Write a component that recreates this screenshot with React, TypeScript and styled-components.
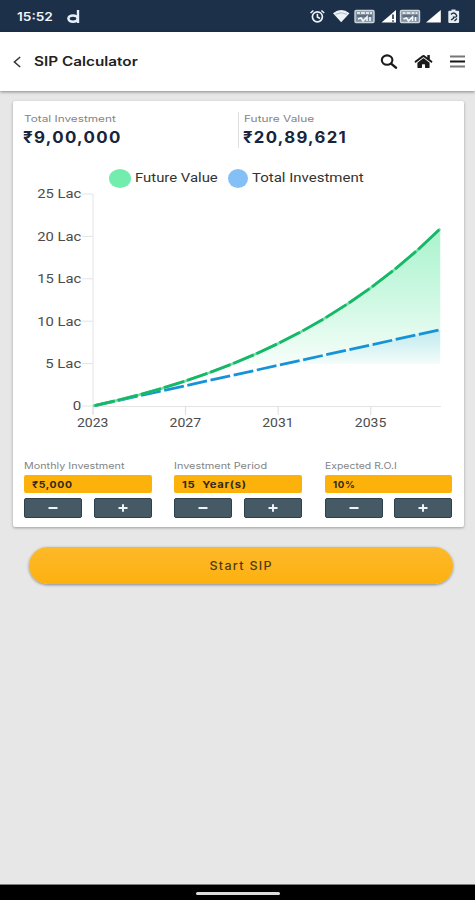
import React from "react";
import styled, { createGlobalStyle } from "styled-components";
import { FaHome } from "react-icons/fa";

const GlobalStyle = createGlobalStyle`
  * { box-sizing: border-box; }
  body { margin: 0; background: #e7e7e7; }
`;

const Screen = styled.div`
  width: 475px;
  height: 900px;
  display: flex;
  flex-direction: column;
  overflow: hidden;
  background: #e7e7e7;
  font-family: Inter, "Liberation Sans", sans-serif;
`;

/* Wide lettering: glyphs are widened from their left edge. */
const Wide = styled.span<{ $x: number; $origin?: string }>`
  display: inline-block;
  white-space: pre;
  transform: scaleX(${(p) => p.$x});
  transform-origin: ${(p) => p.$origin ?? "left"} center;
`;

const StatusBar = styled.div`
  flex: none;
  height: 32px;
  padding: 1px 14px 0 17px;
  display: flex;
  align-items: center;
  justify-content: space-between;
  background: #1c304a;
  color: #f2f6fa;
`;

const Clock = styled(Wide)`
  width: 50px;
  font-size: 12px;
  font-weight: 600;
`;

const StatusLeft = styled.div`
  display: flex;
  align-items: center;
`;

const Header = styled.header`
  flex: none;
  height: 59px;
  padding: 0 9.5px 0 12px;
  display: flex;
  align-items: center;
  background: #fff;
  box-shadow: 0 1px 3px rgba(0, 0, 0, 0.42);
`;

const Title = styled.h1`
  flex: 1;
  margin: 0 0 0 12px;
  font-size: 12.5px;
  line-height: 18px;
  font-weight: 600;
  color: #222;
`;

const HeaderIcons = styled.div`
  display: flex;
  align-items: center;
  gap: 17px;
  color: #1b1b1b;
`;

const IconButton = styled.button`
  display: flex;
  padding: 0;
  border: 0;
  background: none;
  color: inherit;
`;

const HomeIcon = styled(FaHome)`
  width: 17px;
  height: 15px;
  transform: scaleX(1.08);
`;

const Card = styled.main`
  flex: none;
  height: 426px;
  margin: 10px 11px 0 13px;
  padding: 11px 12px 10px 11px;
  display: flex;
  flex-direction: column;
  background: #fff;
  border-radius: 2px;
  box-shadow: 0 1px 3px rgba(0, 0, 0, 0.32);
`;

const Summary = styled.section`
  display: grid;
  grid-template-columns: 214px 1fr;
  height: 35px;
`;

const Figure = styled.div<{ $divided?: boolean }>`
  padding-left: ${(p) => (p.$divided ? 5 : 0)}px;
  border-left: ${(p) => (p.$divided ? "1px solid #dedede" : "0")};
`;

const Caption = styled.div`
  height: 14px;
  font-size: 9px;
  line-height: 14px;
  color: #858585;
`;

const Amount = styled.div`
  height: 22px;
  margin-left: -1px;
  font-size: 15.5px;
  line-height: 23px;
  font-weight: 700;
  letter-spacing: 1.2px;
  color: #17243c;
`;

const Legend = styled.div`
  height: 20px;
  margin: 21px 0 0 84.5px;
  display: flex;
  align-items: center;
`;

const Swatch = styled.span<{ $color: string; $w: number }>`
  width: ${(p) => p.$w}px;
  height: 19px;
  border-radius: 50%;
  background: ${(p) => p.$color};
`;

const LegendLabel = styled.span<{ $w: number }>`
  width: ${(p) => p.$w}px;
  padding-left: 4.5px;
  font: 12.5px/20px Roboto, sans-serif;
  color: #333;
`;

const ChartSvg = styled.svg`
  flex: none;
  display: block;
  width: 428px;
  height: 250px;
  overflow: visible;
  font: 12.5px Roboto, sans-serif;
`;

const Controls = styled.section`
  display: grid;
  grid-template-columns: repeat(3, 127.5px);
  justify-content: space-between;
  margin-top: 21px;
`;

const Value = styled.div`
  height: 18px;
  margin-top: 2px;
  padding-left: 8px;
  border-radius: 2px;
  background: #fdb10b;
  color: #302918;
  font-size: 9.5px;
  line-height: 19px;
  font-weight: 700;
  letter-spacing: 0.6px;
`;

const Steps = styled.div`
  display: grid;
  grid-template-columns: 58px 58px;
  justify-content: space-between;
  margin-top: 5px;
`;

const StepButton = styled.button`
  height: 19.5px;
  padding: 0;
  display: flex;
  align-items: center;
  justify-content: center;
  border: 1px solid #2c414d;
  border-radius: 2px;
  background: #465a66;
`;

const StartButton = styled.button`
  flex: none;
  width: 424px;
  height: 37px;
  margin: 20px 0 0 29px;
  padding: 0;
  border: 0;
  border-radius: 19px;
  background: linear-gradient(180deg, #fdb92a, #fdb10f);
  box-shadow: 0 1px 3px rgba(0, 0, 0, 0.42);
  font-family: inherit;
  font-size: 11.5px;
  font-weight: 500;
  letter-spacing: 1.2px;
  color: #4e3b15;
`;

const NavBar = styled.footer`
  height: 16px;
  margin-top: auto;
  padding-top: 1px;
  display: flex;
  justify-content: center;
  align-items: center;
  background: #000;
  border-top: 1px solid #7c807c;
`;

const NavHandle = styled.div`
  width: 84px;
  height: 3px;
  border-radius: 2px;
  background: #dcdcdc;
`;

const BrandMark = () => (
  <svg width="13" height="14" viewBox="0 0 13 14" fill="none" stroke="#e6f0fa">
    <ellipse cx="6" cy="8.6" rx="4.6" ry="3.2" strokeWidth="2.5" />
    <path d="M11 0v13" strokeWidth="2.4" />
  </svg>
);

const StatusIcons = () => (
  <svg width="152" height="18" viewBox="309 8 152 18" fill="none" stroke="#eef3f8">
    <circle cx="317.4" cy="16.8" r="5" strokeWidth="1.7" />
    <path d="M317.4 13.7v3.3l2.6 1.5M310.6 13l2.8-2.5M324.2 13l-2.8-2.5" strokeWidth="1.6" />
    <path d="M333 13.2Q341.2 7 349.5 13.2L341.2 22.2z" fill="#eef3f8" stroke="none" />
    <path d="M335.5 14.3q5.7-3 11.5 0" strokeWidth="1" stroke="#aab8c7" />
    {[355, 400.5].map((x) => (
      <g key={x}>
        <rect x={x} y="10.5" width="19" height="12" rx="1" strokeWidth="1.4" stroke="#cbd6df" fill="#8191a0" />
        <path d={`M${x + 2} 13h3m1 0h4m1 0h3m1 0h2`} strokeWidth="1.7" stroke="#fff" />
        <path d={`M${x + 2} 16h15`} strokeWidth="1.1" stroke="#3d5268" />
        <path d={`M${x + 3} 19l3-1 2 3 4-4v4m3-4v4`} strokeWidth="1.6" stroke="#f3f7fa" />
      </g>
    ))}
    <path d="M396 10v12.5h-14.5z" fill="#fff" stroke="none" />
    <path d="M393 14.5v4.5m0 1.2v1.5" stroke="#1c304a" strokeWidth="1.6" />
    <path d="M440.8 10v12.5H426z" fill="#fff" stroke="none" />
    <path d="M451.5 9.5h4v1.3h2.6q1 0 1 1V22q0 1-1 1h-8.8q-1 0-1-1V11.8q0-1 1-1h2.2z" fill="#e4ebf1" stroke="none" />
    <path d="M451 14.5q2.7-3 5 0t-2.5 2.6v1.3l-2.5 1.6m3.5 1 2.5-2.5" stroke="#1c304a" strokeWidth="1.3" />
  </svg>
);

const START_YEAR = 2023;
const YEARS = 15;
const MONTHLY = 5000;
const RATE = 0.1 / 12;
const ORIGIN = { x: 69, y: 218 };
const YEAR_W = 23.15;
const LAC_H = 8.48;

const futureValue = (years: number) =>
  (MONTHLY * ((Math.pow(1 + RATE, years * 12) - 1) / RATE) * (1 + RATE)) / 100000;
const invested = (years: number) => (MONTHLY * 12 * years) / 100000;

type Point = [number, number];
const series = (f: (n: number) => number): Point[] =>
  Array.from({ length: YEARS + 1 }, (_, n) => [ORIGIN.x + n * YEAR_W, ORIGIN.y - f(n) * LAC_H]);
const toPath = (pts: Point[]) => "M" + pts.map((p) => p.join(" ")).join("L");
const toArea = (pts: Point[]) =>
  `${toPath(pts)}L${ORIGIN.x + YEARS * YEAR_W} ${ORIGIN.y}L${ORIGIN.x} ${ORIGIN.y}z`;
const toDashes = (pts: Point[], inset: number) =>
  pts
    .slice(1)
    .map((b, i) => {
      const a = pts[i];
      const len = Math.hypot(b[0] - a[0], b[1] - a[1]);
      const dx = ((b[0] - a[0]) / len) * inset;
      const dy = ((b[1] - a[1]) / len) * inset;
      return `M${a[0] + dx} ${a[1] + dy}L${b[0] - dx} ${b[1] - dy}`;
    })
    .join("");

const yTicks = [
  { v: 25, label: "25 Lac", w: 44 },
  { v: 20, label: "20 Lac", w: 44 },
  { v: 15, label: "15 Lac", w: 44 },
  { v: 10, label: "10 Lac", w: 44 },
  { v: 5, label: "5 Lac", w: 36 },
  { v: 0, label: "0", w: 8.5 },
];

function Chart() {
  const value = series(futureValue);
  const total = series(invested);
  return (
    <ChartSvg viewBox="0 0 428 250">
      <defs>
        <linearGradient id="valueFill" gradientUnits="userSpaceOnUse" x1="0" y1="41" x2="0" y2="176">
          <stop offset="0" stopColor="#6debaa" stopOpacity="0.58" />
          <stop offset="0.55" stopColor="#6debaa" stopOpacity="0.32" />
          <stop offset="1" stopColor="#6debaa" stopOpacity="0.06" />
        </linearGradient>
        <linearGradient id="totalFill" gradientUnits="userSpaceOnUse" x1="0" y1="141" x2="0" y2="176">
          <stop offset="0" stopColor="#7cc4f4" stopOpacity="0.32" />
          <stop offset="1" stopColor="#7cc4f4" stopOpacity="0.02" />
        </linearGradient>
        <clipPath id="plot">
          <rect x="69" y="0" width="349" height="176" />
        </clipPath>
      </defs>
      <path d={`M69 6V226M69 ${ORIGIN.y + 0.5}H417`} stroke="#e4e4e4" fill="none" />
      {yTicks.map((t) => {
        const y = ORIGIN.y - t.v * LAC_H;
        return (
          <g key={t.v}>
            <path d={`M58 ${y}H69`} stroke="#e4e4e4" />
            <text x={57.2 - t.w} y={y + 4.3} fill="#4c4c4c" textLength={t.w} lengthAdjust="spacingAndGlyphs">
              {t.label}
            </text>
          </g>
        );
      })}
      {[0, 4, 8, 12].map((n) => {
        const x = ORIGIN.x + n * YEAR_W;
        return (
          <g key={n}>
            <path d={`M${x} ${ORIGIN.y}v9`} stroke="#dcdcdc" />
            <text x={x - 16} y="239.3" fill="#4c4c4c" textLength={31.5} lengthAdjust="spacingAndGlyphs">
              {START_YEAR + n}
            </text>
          </g>
        );
      })}
      <g clipPath="url(#plot)">
        <path d={toArea(value)} fill="url(#valueFill)" />
        <path d={toArea(total)} fill="url(#totalFill)" />
      </g>
      <path d={toDashes(total, 1.8)} stroke="#1593d6" strokeWidth="2.8" fill="none" />
      <path d={toPath(value)} stroke="#6fe0a5" strokeWidth="2.6" fill="none" />
      <path d={toDashes(value, 1.5)} stroke="#16b868" strokeWidth="2.8" fill="none" />
    </ChartSvg>
  );
}

const fields = [
  { name: "Monthly Investment", nameX: 1.2, value: "₹5,000", valueX: 1.1 },
  { name: "Investment Period", nameX: 1.21, value: "15  Year(s)", valueX: 1.18 },
  { name: "Expected R.O.I", nameX: 1.16, value: "10%", valueX: 1.02 },
];

const StepIcon = ({ plus }: { plus?: boolean }) => (
  <svg width="10" height="8" viewBox="0 0 10 8" stroke="#eef5fa" strokeWidth="2">
    <path d={plus ? "M.5 4h9M5 .2v7.6" : "M.5 4h9"} />
  </svg>
);

export default function App() {
  return (
    <>
      <GlobalStyle />
      <Screen>
        <StatusBar>
          <StatusLeft>
            <Clock $x={1.14}>15:52</Clock>
            <BrandMark />
          </StatusLeft>
          <StatusIcons />
        </StatusBar>
        <Header>
          <IconButton aria-label="Back">
            <svg width="10" height="12" viewBox="0 0 10 12" fill="none" stroke="#333" strokeWidth="1.5">
              <path d="M8.2 1 2.4 6l5.8 5" />
            </svg>
          </IconButton>
          <Title>
            <Wide $x={1.225}>SIP Calculator</Wide>
          </Title>
          <HeaderIcons>
            <IconButton aria-label="Search">
              <svg width="18" height="15" viewBox="0 0 18 15" fill="none" stroke="#1b1b1b">
                <ellipse cx="7.1" cy="6.1" rx="5.3" ry="4.7" strokeWidth="2.1" />
                <path d="m11.1 9.6 4.8 4" strokeWidth="2.5" strokeLinecap="round" />
              </svg>
            </IconButton>
            <IconButton aria-label="Home">
              <HomeIcon />
            </IconButton>
            <IconButton aria-label="Menu">
              <svg width="17" height="13" viewBox="-1 0 17 13" strokeWidth="2">
                <path d="M0 1.5h15M0 11.5h15" stroke="#777" />
                <path d="M0 6.5h15" stroke="#151515" />
              </svg>
            </IconButton>
          </HeaderIcons>
        </Header>
        <Card>
          <Summary>
            <Figure>
              <Caption>
                <Wide $x={1.31}>Total Investment</Wide>
              </Caption>
              <Amount>
                <Wide $x={1.09}>₹9,00,000</Wide>
              </Amount>
            </Figure>
            <Figure $divided>
              <Caption>
                <Wide $x={1.32}>Future Value</Wide>
              </Caption>
              <Amount>
                <Wide $x={1.08}>₹20,89,621</Wide>
              </Amount>
            </Figure>
          </Summary>
          <Legend>
            <Swatch $color="#73edae" $w={22} />
            <LegendLabel $w={97}>
              <Wide $x={1.19}>Future Value</Wide>
            </LegendLabel>
            <Swatch $color="#84c0f5" $w={20} />
            <LegendLabel $w={130}>
              <Wide $x={1.2}>Total Investment</Wide>
            </LegendLabel>
          </Legend>
          <Chart />
          <Controls>
            {fields.map((f) => (
              <div key={f.name}>
                <Caption>
                  <Wide $x={f.nameX}>{f.name}</Wide>
                </Caption>
                <Value>
                  <Wide $x={f.valueX}>{f.value}</Wide>
                </Value>
                <Steps>
                  <StepButton aria-label={`Decrease ${f.name}`}>
                    <StepIcon />
                  </StepButton>
                  <StepButton aria-label={`Increase ${f.name}`}>
                    <StepIcon plus />
                  </StepButton>
                </Steps>
              </div>
            ))}
          </Controls>
        </Card>
        <StartButton>
          <Wide $x={1.09} $origin="center">Start SIP</Wide>
        </StartButton>
        <NavBar>
          <NavHandle />
        </NavBar>
      </Screen>
    </>
  );
}
